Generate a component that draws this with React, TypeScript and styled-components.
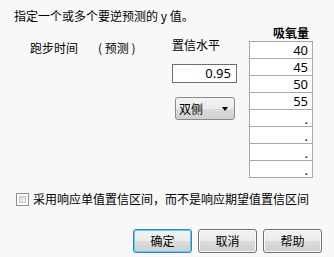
import React from 'react';
import styled, { createGlobalStyle } from 'styled-components';

const GlobalStyle = createGlobalStyle`
  html, body {
    margin: 0;
    padding: 0;
    background: #f8f8f8;
  }
  body {
    font-family: "Noto Sans CJK SC", "Noto Sans", sans-serif;
    font-size: 12px;
    color: #000;
  }
`;

const Dialog = styled.div`
  width: 334px;
  height: 257px;
  box-sizing: border-box;
  padding: 8px 12px 0 14px;
  display: flex;
  flex-direction: column;
  background: #f8f8f8;
`;

const Prompt = styled.div`
  line-height: 16px;
  height: 16px;
  white-space: nowrap;
`;

const Main = styled.div`
  margin-top: 1px;
  display: grid;
  grid-template-columns: 158px 77px 64px;
  align-items: start;
`;

const ColumnLabel = styled.div`
  padding: 15px 0 0 16px;
  line-height: 16px;
  display: flex;
  white-space: nowrap;
`;

const Hint = styled.span`
  margin-left: 20px;
  white-space: pre;
`;

const Settings = styled.div`
  padding-top: 12px;
  display: flex;
  flex-direction: column;
  align-items: flex-start;
`;

const SettingLabel = styled.div`
  line-height: 16px;
`;

const NumberBox = styled.div`
  margin-top: 11px;
  width: 65px;
  height: 19px;
  box-sizing: border-box;
  border: 1px solid #6e6e6e;
  background: #fff;
  font-family: "Noto Sans", sans-serif;
  font-size: 13px;
  line-height: 17px;
  text-align: right;
  padding-right: 5px;
`;

const Select = styled.div`
  margin: 14px 0 0 3px;
  width: 60px;
  height: 23px;
  box-sizing: border-box;
  border: 1px solid #8a8a8a;
  border-radius: 3px;
  background: linear-gradient(#f3f3f3 0%, #ebebeb 50%, #dcdcdc 51%, #d0d0d0 100%);
  display: flex;
  align-items: center;
  justify-content: space-between;
  padding: 0 6px 0 3px;
`;

const Caret = styled.span`
  width: 0;
  height: 0;
  border-left: 3.5px solid transparent;
  border-right: 3.5px solid transparent;
  border-top: 4px solid #000;
`;

const DataColumn = styled.div`
  display: flex;
  flex-direction: column;
`;

const DataHeader = styled.div`
  font-weight: bold;
  line-height: 16px;
  height: 16px;
  text-align: right;
  padding-right: 4px;
`;

const Grid = styled.div`
  border: 1px solid #a8a8a8;
  border-top: none;
  background: #fff;
`;

const Cell = styled.div<{ $empty?: boolean }>`
  height: 16px;
  border-top: 1px solid #a8a8a8;
  box-sizing: content-box;
  font-family: "Noto Sans", sans-serif;
  font-size: 13px;
  line-height: ${(p) => (p.$empty ? '19px' : '16px')};
  text-align: right;
  padding-right: 4px;
`;

const OptionRow = styled.label`
  margin-top: 13px;
  padding-left: 2px;
  display: flex;
  align-items: center;
  line-height: 16px;
  white-space: nowrap;
`;

const Box = styled.span`
  width: 13px;
  height: 13px;
  box-sizing: border-box;
  border: 1px solid #8e8f8f;
  background: #fff;
  margin-right: 4px;
  display: flex;
  padding: 2px;

  &::after {
    content: '';
    flex: 1;
    border: 1px solid #c8c8c8;
    background: linear-gradient(135deg, #d6d6d6, #f6f6f6);
  }
`;

const Actions = styled.div`
  margin-top: 22px;
  display: flex;
  justify-content: flex-end;
  gap: 6px;
`;

const Button = styled.button<{ $default?: boolean }>`
  width: 59px;
  height: 24px;
  box-sizing: border-box;
  border: 1px solid ${(p) => (p.$default ? '#3c7fb1' : '#707070')};
  border-radius: 3px;
  background: linear-gradient(#f2f2f2 0%, #ebebeb 50%, #dddddd 51%, #cfcfcf 100%);
  box-shadow: ${(p) =>
    p.$default ? 'inset 0 0 0 1px #48d5ff' : 'inset 0 0 0 1px #fbfbfb'};
  font-family: "Noto Sans CJK SC", sans-serif;
  font-size: 12px;
  color: #000;
  padding: 0;
  line-height: 20px;
`;

const values = ['40', '45', '50', '55', '.', '.', '.', '.'];

export default function App() {
  return (
    <>
      <GlobalStyle />
      <Dialog>
        <Prompt>指定一个或多个要逆预测的 y 值。</Prompt>
        <Main>
          <ColumnLabel>
            跑步时间<Hint>( 预测 )</Hint>
          </ColumnLabel>
          <Settings>
            <SettingLabel>置信水平</SettingLabel>
            <NumberBox>0.95</NumberBox>
            <Select>
              双侧
              <Caret />
            </Select>
          </Settings>
          <DataColumn>
            <DataHeader>吸氧量</DataHeader>
            <Grid>
              {values.map((v, i) => (
                <Cell key={i} $empty={v === '.'}>
                  {v}
                </Cell>
              ))}
            </Grid>
          </DataColumn>
        </Main>
        <OptionRow>
          <Box />
          采用响应单值置信区间，而不是响应期望值置信区间
        </OptionRow>
        <Actions>
          <Button $default>确定</Button>
          <Button>取消</Button>
          <Button>帮助</Button>
        </Actions>
      </Dialog>
    </>
  );
}
